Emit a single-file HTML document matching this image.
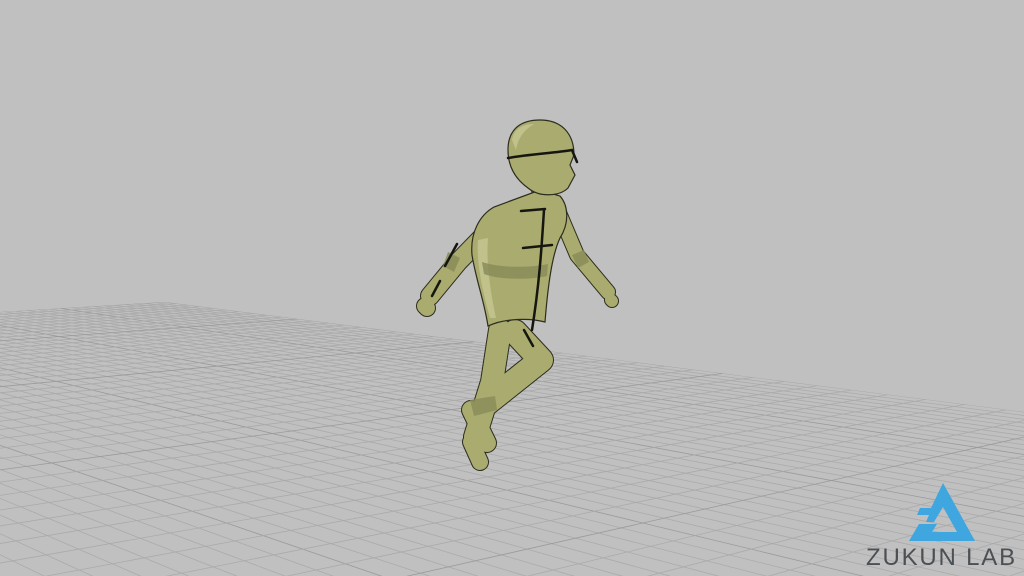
<!DOCTYPE html>
<html><head><meta charset="utf-8"><style>
html,body{margin:0;padding:0;width:1024px;height:576px;overflow:hidden;background:#c0c0c0}
svg{position:absolute;left:0;top:0}
.t{position:absolute;left:866px;top:546px;line-height:24px;height:24px;font-family:"Liberation Sans",sans-serif;font-size:24px;letter-spacing:1.8px;color:#4b5055;white-space:nowrap;overflow:hidden}
</style></head><body>
<svg width="1024" height="576" viewBox="0 0 1024 576">
<defs><clipPath id="fl"><polygon points="0,312 165,302 1024,412 1024,576 0,576"/></clipPath></defs>
<g clip-path="url(#fl)" stroke="#aaaaaa" stroke-width="0.8" fill="none" id="grid"></g>
<g stroke-linecap="round" stroke-linejoin="round" fill="none">
<g stroke="#2d2d1e">
<path d="M500,330 L492,382 L475,437" stroke-width="24"/>
<path d="M471,442 L480,462" stroke-width="18"/>
<path d="M515,332 L541,360 L487,403" stroke-width="26"/>
<path d="M471,410 L487,443" stroke-width="20"/>
<path d="M497,222 L458,262 L430,296" stroke-width="20"/>
<path d="M425,306 L427,308" stroke-width="18"/>
<path d="M560,215 L577,255 L608,292" stroke-width="16"/>
<path d="M611,300 L612,301" stroke-width="14"/>
<path d="M540,182 L545,200" stroke-width="22"/>
</g>
<g stroke="#aaab6e">
<path d="M500,330 L492,382 L475,437" stroke-width="22"/>
<path d="M471,442 L480,462" stroke-width="16"/>
<path d="M515,332 L541,360 L487,403" stroke-width="24"/>
<path d="M471,410 L487,443" stroke-width="18"/>
<path d="M497,222 L458,262 L430,296" stroke-width="18"/>
<path d="M425,306 L427,308" stroke-width="16"/>
<path d="M560,215 L577,255 L608,292" stroke-width="14"/>
<path d="M611,300 L612,301" stroke-width="12"/>
<path d="M540,182 L545,200" stroke-width="20"/>
</g>
</g>
<g stroke="#2d2d1e" stroke-width="1.2" fill="#aaab6e">
<path d="M494,207 C480,215 470,232 472,255 C476,280 484,300 488,326 C505,318 530,318 545,322 C548,285 552,255 560,238 C570,222 568,205 560,196 L540,190 Z"/>
<path d="M508,150 C508,128 522,120 540,120 C562,120 574,134 574,155 L570,165 L575,175 L568,188 C560,196 540,198 528,188 C514,178 508,165 508,150 Z"/>
</g>
<g fill="#c6c792" opacity="0.8">
<path d="M478,240 C476,260 482,290 490,318 L496,318 C490,290 486,262 488,238 Z"/>
<path d="M512,140 C514,128 524,124 534,124 C524,130 518,138 516,150 Z"/>
</g>
<g fill="#8b8d5a" opacity="0.85">
<path d="M482,262 C500,268 530,268 548,264 L547,276 C530,280 500,280 484,274 Z"/>
<path d="M448,252 L460,258 L454,272 L443,266 Z"/>
<path d="M572,255 L584,250 L589,262 L578,268 Z"/>
<path d="M470,400 L495,396 L497,410 L474,416 Z"/>
</g>
<g fill="none" stroke="#161610" stroke-width="2.5" stroke-linecap="round">
<path d="M508,158 C530,154 555,153 572,150 L577,162"/>
<path d="M521,211 L545,209 M544,210 C542,240 540,280 532,330 M523,248 L552,245"/>
<path d="M445,266 L457,244 M432,296 L440,281 M524,330 L533,346"/>
</g>
<path fill="#3fa6df" d="M943,483 L975,541 L909,541 L919,524 L937,524 L932,532 L957,532 L943,507 L934,522 L926,522 L929,515 L917,515 L920,508 L931,508 Z"/>
</svg>
<div class="t">ZUKUN LAB</div>
<script>
var g=document.getElementById('grid'),s='';
var O=[165,302],Vu=[-765,183],Vv=[2150,183],a=0.0125,b=0.005,WM=0.03;
function P(k,m){
 var w=1-k*a-m*b;
 return [(O[0]-k*a*Vu[0]-m*b*Vv[0])/w,(O[1]-k*a*Vu[1]-m*b*Vv[1])/w];
}
function L(k0,m0,k1,m1,c){
 var p=P(k0,m0),q=P(k1,m1);
 s+='<line x1="'+p[0].toFixed(1)+'" y1="'+p[1].toFixed(1)+'" x2="'+q[0].toFixed(1)+'" y2="'+q[1].toFixed(1)+'"'+(c?' stroke="#9a9a9a"':'')+'/>';
}
for(var m=0;m*b<1-WM;m++){var km=(1-WM-m*b)/a;L(0,m,km,m,m%10==0);}
for(var k=0;k*a<1-WM;k++){var mm=(1-WM-k*a)/b;L(k,0,k,mm,k%10==0);}
g.innerHTML=s;
</script>
</body></html>
